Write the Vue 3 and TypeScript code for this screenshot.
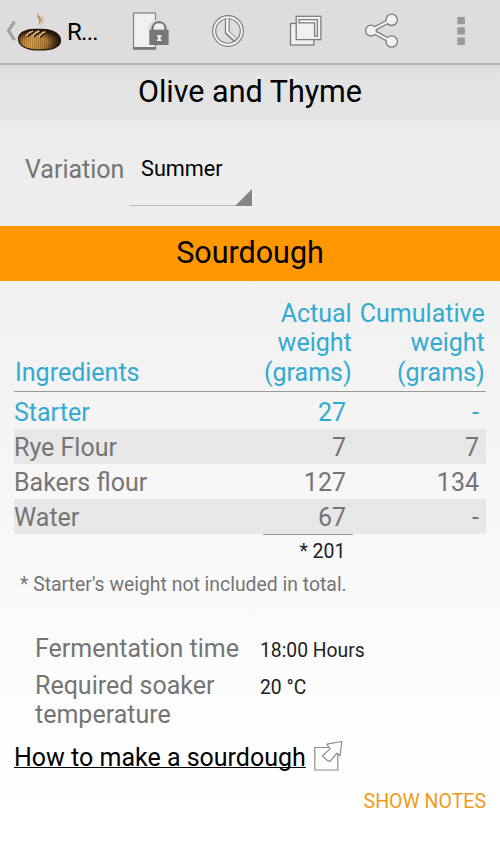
<script setup lang="ts">
interface Ingredient {
  name: string
  actual: string
  cumulative: string
  starter?: boolean
}

const ingredients: Ingredient[] = [
  { name: 'Starter', actual: '27', cumulative: '-', starter: true },
  { name: 'Rye Flour', actual: '7', cumulative: '7' },
  { name: 'Bakers flour', actual: '127', cumulative: '134' },
  { name: 'Water', actual: '67', cumulative: '-' },
]

const details = [
  { label: 'Fermentation time', value: '18:00 Hours' },
  { label: 'Required soaker temperature', value: '20 °C' },
]
</script>

<template>
  <div class="screen">
    <header class="bar">
      <div class="home">
        <svg class="brand" width="64" height="64" viewBox="0 0 64 64">
          <defs>
            <linearGradient id="crust" x1="0" y1="0" x2="1" y2="0.15">
              <stop offset="0" stop-color="#b0742a" />
              <stop offset="0.4" stop-color="#dea045" />
              <stop offset="0.7" stop-color="#bb8234" />
              <stop offset="1" stop-color="#6b481a" />
            </linearGradient>
            <pattern id="grain" width="2" height="2" patternUnits="userSpaceOnUse">
              <rect width="0.8" height="2" fill="#2b1804" opacity="0.3" />
            </pattern>
            <radialGradient id="shade" cx="0.42" cy="0.66" r="0.6">
              <stop offset="0.5" stop-color="#1b1004" stop-opacity="0" />
              <stop offset="1" stop-color="#120a02" stop-opacity="0.85" />
            </radialGradient>
          </defs>
          <path d="M14.500 21.500 8.500 30.500l6 9.500" fill="none" stroke="#a3a3a3" stroke-width="3.200" />
          <path d="M39 12.300c-2.700 2.800 3.600 4.800 2.100 8.700-.5 2-1.700 3-2.500 4 1-3.500.6-4.800-.5-6.400-1.300-2.200-1-4.600.9-6.300Z" fill="#b88d68" />
          <path d="M43.200 15c-1.400 2.400 1.200 4 .2 6.800-.5 1.900-1.500 3-2.400 4 .8-3 .8-4.300.5-5.600-.4-2 .3-4 1.700-5.200Z" fill="#dbb699" />
          <path d="M18.500 39c0-5.500 6.500-9.700 16-9.800h7c10.500 0 19 4.500 19 11.300 0 7-9.500 9.500-21 9.500-12.500 0-21-3.800-21-11Z" fill="url(#crust)" />
          <path d="M18.500 39c0-5.500 6.500-9.700 16-9.800h7c10.500 0 19 4.500 19 11.300 0 7-9.500 9.500-21 9.500-12.500 0-21-3.800-21-11Z" fill="url(#grain)" />
          <path d="M18.500 39c0-5.500 6.500-9.700 16-9.800h7c10.500 0 19 4.500 19 11.300 0 7-9.500 9.500-21 9.500-12.500 0-21-3.800-21-11Z" fill="url(#shade)" stroke="#1c1206" stroke-width="1.100" />
          <path d="M27 36.300c2-2.400 4-4.100 7-5M33.500 36.800c2-2.700 4-4.700 7.500-5.700M40 37.300c1.500-2.700 4-4.700 7.500-5.500" fill="none" stroke="#1b1005" stroke-width="2.400" />
          <path d="M26 36c2-2.700 4-4.300 7-5.100M32.500 36.500c2-3 4-4.600 7-5.400M39 37c1.500-2.800 3.500-4.500 6.500-5.300" fill="none" stroke="#e6bc80" stroke-width="1.600" />
        </svg>
        <span class="app-title">R...</span>
      </div>
      <svg class="action" viewBox="112 0 78 64">
        <rect x="133.500" y="13" width="22" height="35" fill="#f0f0f0" stroke="#808080" stroke-width="1.200" />
        <path d="M133 48.400h23" stroke="#777" stroke-width="2.800" />
        <path d="M150 31v-2.500c0-10 17.500-10 17.500 0V31" fill="#ddd" stroke="#ddd" stroke-width="3" />
        <path d="M152.500 31v-2.300c0-8.800 13-8.800 13 0V31" fill="#eee" stroke="#777" stroke-width="2.300" />
        <path d="M149.300 29.700h19.300V45h-19.300z" fill="#777" />
        <path d="M157 35.300h4.600v1.500l-1.400 1v1l1.400 1v1.300H157v-1.300l1.400-1v-1l-1.400-1z" fill="#f4f4f4" />
      </svg>
      <svg class="action" viewBox="189.500 0 78 64">
        <circle cx="227.500" cy="31" r="13.800" fill="#ddd" stroke="#7c7c7c" stroke-width="4.200" />
        <circle cx="227.500" cy="31" r="13.800" fill="none" stroke="#f6f6f6" stroke-width="1.900" />
        <path d="M226.800 18.500v14l8 7.500" fill="none" stroke="#7c7c7c" stroke-width="4.800" />
        <path d="M226.800 18.500v13.500l8 7.300" fill="none" stroke="#f4f4f4" stroke-width="2.500" />
      </svg>
      <svg class="action" viewBox="267 0 78 64" fill="#f0f0f0" stroke="#7c7c7c" stroke-width="1.300">
        <rect x="290.500" y="23.500" width="23.300" height="21.500" />
        <rect x="296.200" y="16.300" width="24.700" height="23.300" />
        <path d="M299 19.600h18.300v16.600h-2.700V22.800H299z" fill="#f5f5f5" />
      </svg>
      <svg class="action" viewBox="344.500 0 78 64">
        <path d="m391 19.800-20.500 10.800L391 41.500" fill="none" stroke="#7c7c7c" stroke-width="4.600" />
        <g fill="#f2f2f2" stroke="#7c7c7c" stroke-width="1.300">
          <circle cx="370.500" cy="30.600" r="5.400" />
          <circle cx="391.200" cy="19.800" r="5.700" />
          <circle cx="391.200" cy="41.500" r="5.700" />
        </g>
        <path d="m391 19.800-20.500 10.800L391 41.500" fill="none" stroke="#f2f2f2" stroke-width="2.100" />
      </svg>
      <svg class="action" viewBox="422 0 78 64" fill="#999">
        <path d="M457.300 17h7.600v7.300h-7.600zM457.300 27.300h7.600v7.300h-7.600zM457.300 37.600h7.600v7.300h-7.600z" />
      </svg>
    </header>

    <h1 class="recipe">Olive and Thyme</h1>

    <div class="variation">
      <span class="variation-label">Variation</span>
      <div class="spinner">
        <span>Summer</span>
        <i class="corner"></i>
      </div>
    </div>

    <h2 class="section">Sourdough</h2>

    <div class="table">
      <div class="row head">
        <span class="name">Ingredients</span>
        <span class="col">Actual weight (grams)</span>
        <span class="col">Cumulative weight (grams)</span>
      </div>
      <div v-for="item in ingredients" :key="item.name" class="row item" :class="{ starter: item.starter }">
        <span>{{ item.name }}</span>
        <span class="num">{{ item.actual }}</span>
        <span class="num">{{ item.cumulative }}</span>
      </div>
      <div class="row total"><span class="sum">* 201</span></div>
    </div>
    <p class="footnote">* Starter's weight not included in total.</p>

    <dl class="details">
      <template v-for="d in details" :key="d.label">
        <dt>{{ d.label }}</dt>
        <dd>{{ d.value }}</dd>
      </template>
    </dl>

    <div class="howto">
      <a>How to make a sourdough</a>
      <svg width="30" height="32" viewBox="313 740 30 32" fill="none" stroke="#8c8c8c" stroke-width="1.200">
        <path d="M328.500 747.500h-13.700V770h23v-16.500" />
        <path d="m326.800 744.200 15-2.700-1.700 14.300-3.200-2.700-7 8.400q-4-1-7.500-5.800l7.700-6.800z" stroke-linejoin="round" />
      </svg>
    </div>
    <div class="notes">SHOW NOTES</div>
  </div>
</template>

<style>
body {
  margin: 0;
}
</style>

<style scoped>
.screen {
  box-sizing: border-box;
  width: 500px;
  height: 852px;
  overflow: hidden;
  font-family: Roboto, sans-serif;
  font-size: 25px;
  line-height: 29.500px;
  color: #757575;
  background: linear-gradient(#e9e9e9 64px, #eee 200px, #f5f5f5 430px, #fcfcfc 680px, #fff 820px);
}
.bar {
  display: grid;
  grid-template-columns: 112px repeat(5, 77.500px);
  height: 63px;
  background: #ddd;
  border-bottom: 2px solid #b5b5b5;
  overflow: hidden;
}
.home {
  display: flex;
}
.brand {
  flex: none;
}
.app-title {
  margin-left: 3px;
  font-size: 24px;
  line-height: 64px;
  letter-spacing: -0.700px;
  color: #000;
}
.action {
  width: 78px;
  height: 64px;
}
.recipe,
.section {
  margin: 0;
  font-size: 30.500px;
  font-weight: 400;
  text-align: center;
  color: #000;
}
.recipe {
  height: 55px;
  line-height: 53px;
  background: linear-gradient(#d9d9d9, #e3e3e3 10px);
}
.variation {
  display: flex;
  height: 106px;
  padding-left: 25px;
  box-sizing: border-box;
}
.variation-label {
  width: 105px;
  padding-top: 35px;
}
.spinner {
  display: flex;
  justify-content: space-between;
  flex-direction: column;
  box-sizing: border-box;
  width: 122px;
  height: 86px;
  padding: 34px 0 0 11px;
  font-size: 21.700px;
  color: #000;
  background: linear-gradient(#b8b8b8, #b8b8b8) 0 100% / 100% 1px no-repeat;
}
.corner {
  align-self: flex-end;
  width: 17px;
  height: 17px;
  background: #858585;
  clip-path: polygon(100% 0, 100% 100%, 0 100%);
}
.section {
  height: 55px;
  line-height: 54px;
  background: #ff9800;
}
.table {
  margin: 0 14px;
}
.row {
  display: grid;
  grid-template-columns: 1fr 90px 133px;
}
.head {
  align-items: end;
  height: 111px;
  margin-bottom: 2px;
  padding-bottom: 4px;
  box-sizing: border-box;
  border-bottom: 1px solid #999;
  color: #33aad2;
}
.name {
  padding-left: 1px;
}
.col {
  padding-right: 1.300px;
  text-align: right;
}
.item {
  height: 35px;
  line-height: 37px;
}
.item:nth-child(odd) {
  background: #e7e7e7;
}
.item .num {
  padding-right: 7px;
  text-align: right;
}
.starter {
  color: #33aad2;
}
.total {
  height: 35px;
}
.sum {
  grid-column: 2;
  border-top: 1px solid #999;
  padding-right: 7.500px;
  text-align: right;
  font-size: 19.500px;
  line-height: 34px;
  color: #212121;
}
.footnote {
  margin: 0 0 0 20px;
  font-size: 19.400px;
  line-height: 32px;
}
.details {
  display: grid;
  grid-template-columns: 225px 1fr;
  row-gap: 5px;
  margin: 33px 0 0 35px;
}
.details dd {
  margin: 2px 0 0;
  font-size: 19.300px;
  color: #212121;
}
.howto {
  display: flex;
  gap: 7px;
  height: 34px;
  margin: 10px 0 0 14px;
}
.howto a {
  padding-top: 3px;
  color: #000;
  text-decoration: underline;
  text-decoration-thickness: 1px;
  text-decoration-skip-ink: none;
}
.notes {
  margin: 13px 14px 0 0;
  font-size: 19.500px;
  text-align: right;
  color: #f39a16;
}
</style>
